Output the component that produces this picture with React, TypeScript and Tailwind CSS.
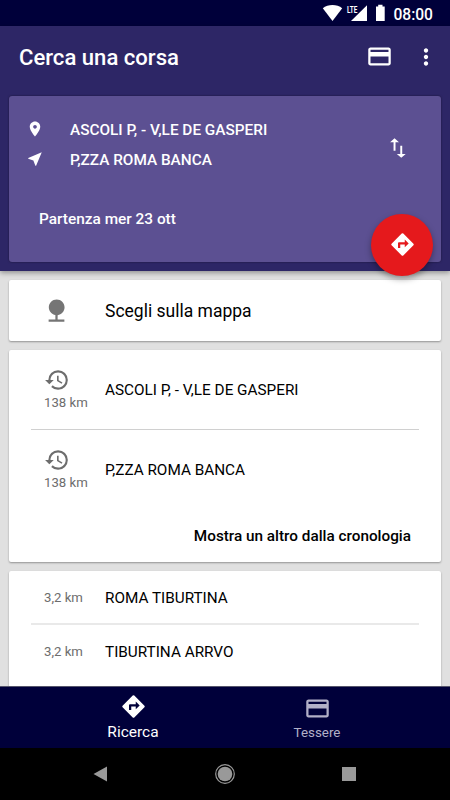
import { ReactNode } from "react";

type IconProps = {
    d: string;
    className?: string;
};

type StopRowProps = {
    distance: string;
    name: string;
    recent?: boolean;
};

const icons = {
    card: "M20 4H4c-1.11 0-1.99.89-1.99 2L2 18c0 1.11.89 2 2 2h16c1.11 0 2-.89 2-2V6c0-1.11-.89-2-2-2zm0 14H4v-6h16v6zm0-10H4V6h16v2z",
    more: "M12 8c1.1 0 2-.9 2-2s-.9-2-2-2-2 .9-2 2 .9 2 2 2zm0 2c-1.1 0-2 .9-2 2s.9 2 2 2 2-.9 2-2-.9-2-2-2zm0 6c-1.1 0-2 .9-2 2s.9 2 2 2 2-.9 2-2-.9-2-2-2z",
    place: "M12 2C8.13 2 5 5.13 5 9c0 5.25 7 13 7 13s7-7.75 7-13c0-3.87-3.13-7-7-7zm0 9.5c-1.38 0-2.5-1.12-2.5-2.5s1.12-2.5 2.5-2.5 2.5 1.12 2.5 2.5-1.12 2.5-2.5 2.5z",
    nearMe: "M21 3L3 10.53v.98l6.84 2.65L12.48 21h.98L21 3z",
    swap: "M15.9 17.6V10h-1.8v7.6h-3.2L15 21l4.1-3.4h-3.2zM8.8 3L4.7 6.6h3.2V14.5h1.8V6.6h3.2L8.8 3z",
    directions: "M21.71 11.29l-9-9a.996.996 0 0 0-1.41 0l-9 9a.996.996 0 0 0 0 1.41l9 9c.39.39 1.02.39 1.41 0l9-9a.996.996 0 0 0 0-1.41zM14 14.5V12h-4v3H8v-4c0-.55.45-1 1-1h5V7.5l3.5 3.5-3.5 3.5z",
    nature: "M13 16.12c3.47-.41 6.17-3.36 6.17-6.95 0-3.87-3.13-7-7-7s-7 3.13-7 7c0 3.47 2.52 6.34 5.83 6.89V20H5v2h14v-2h-6v-3.88z",
    history: "M13 3a9 9 0 0 0-9 9H1l3.89 3.89.07.14L9 12H6c0-3.87 3.13-7 7-7s7 3.13 7 7-3.13 7-7 7c-1.93 0-3.68-.79-4.94-2.06l-1.42 1.42A8.954 8.954 0 0 0 13 21a9 9 0 0 0 0-18zm-1 5v5l4.28 2.54.72-1.21-3.5-2.08V8H12z",
};

function Icon({ d, className = "size-[27px]" }: IconProps) {
    return (
        <svg viewBox="0 0 24 24" fill="currentColor" className={`shrink-0 ${className}`}>
            <path d={d} />
        </svg>
    );
}

function StatusBar() {
    return (
        <div className="flex h-[26px] shrink-0 items-center justify-end bg-[#00003a] pr-[17px] text-white">
            <svg viewBox="322 3 64 20" fill="currentColor" className="mr-[7px] h-5 w-16">
                <path d="M322.8 8.3C328 4 337 4 342.2 8.3L332.5 21z" />
                <path d="M367 5.3V21h-16z" />
                <path d="M376 6.5h2.2V4.8h4.3v1.7h2.2V21H376z" />
                <path d="M346 4h12v9h-12z" fill="#00003a" />
                <text x="347" y="12.6" fontSize="9.6" fontWeight="700" textLength="10.3" lengthAdjust="spacingAndGlyphs">
                    LTE
                </text>
            </svg>
            <span className="pt-[3px] text-[15.6px] leading-5 font-medium">08:00</span>
        </div>
    );
}

function Card({ children, className = "" }: { children: ReactNode; className?: string }) {
    return (
        <div className={`mx-[9px] shrink-0 rounded-[2px] bg-white shadow-[0_1px_2px_rgba(0,0,0,0.35)] ${className}`}>
            {children}
        </div>
    );
}

function StopRow({ distance, name, recent = false }: StopRowProps) {
    return (
        <div className={`flex items-center ${recent ? "h-[80px]" : "h-[54px]"}`}>
            <div className="w-[96px] shrink-0 pl-[35px] text-[#6d6d6d]">
                {recent && <Icon d={icons.history} className="-mt-px mb-px size-[26px]" />}
                <div className="text-[13.2px] leading-[18px]">{distance}</div>
            </div>
            <span className="text-[15.3px] whitespace-nowrap text-black">{name}</span>
        </div>
    );
}

function Divider({ className = "" }: { className?: string }) {
    return <div className={`mr-[22px] ml-[22px] ${className}`} />;
}

export default function App() {
    return (
        <div className="flex h-[800px] w-[450px] flex-col overflow-hidden bg-[#e0e0e0] font-[Roboto,sans-serif]">
            <StatusBar />

            <header className="relative z-10 h-[245px] shrink-0 bg-[#2d2666] text-white shadow-[0_2px_5px_rgba(0,0,0,0.35)]">
                <div className="flex h-[70px] items-center pb-[8px] pl-[19px]">
                    <h1 className="flex-1 pt-[2px] text-[22.1px] font-medium">Cerca una corsa</h1>
                    <Icon d={icons.card} className="mb-px size-[27px]" />
                    <Icon d={icons.more} className="mr-[11px] ml-5 size-[26px]" />
                </div>
                <div className="mx-[9px] flex h-[166px] rounded-[3px] bg-[#5c5092] shadow-[0_0_2px_rgba(0,0,0,0.5)]">
                    <div className="flex-1 pt-[18px] font-medium">
                        <div className="flex h-[30px] items-center pl-[17px] text-[15.35px]">
                            <Icon d={icons.place} className="mr-[26px] size-[18px]" />
                            <span className="pt-[3px]">ASCOLI P, - V,LE DE GASPERI</span>
                        </div>
                        <div className="flex h-[31px] items-center pl-[17px] text-[15.35px]">
                            <Icon d={icons.nearMe} className="mr-[26px] mb-px size-[18px]" />
                            <span className="pt-[3px]">P,ZZA ROMA BANCA</span>
                        </div>
                        <div className="mt-[32px] pl-[30px] text-[15.4px] leading-6">Partenza mer 23 ott</div>
                    </div>
                    <Icon d={icons.swap} className="mt-[39px] mr-[30px] size-[26px]" />
                </div>
                <button className="absolute top-[188px] right-[17px] flex size-[62px] items-center justify-center rounded-full bg-[#e5191c] shadow-[0_3px_6px_rgba(0,0,0,0.35)]">
                    <Icon d={icons.directions} className="mb-px size-[27px]" />
                </button>
            </header>

            <main className="flex min-h-0 flex-1 flex-col gap-[9px] overflow-hidden pt-[9px]">
                <Card className="flex h-[61px] items-center">
                    <Icon d={icons.nature} className="mr-[35px] ml-[34px] size-[27px] text-[#757575]" />
                    <span className="pt-[2px] text-[17.5px] text-black">Scegli sulla mappa</span>
                </Card>

                <Card className="h-[212px]">
                    <StopRow recent distance="138 km" name="ASCOLI P, - V,LE DE GASPERI" />
                    <Divider className="-mt-px h-px bg-[#d0d0d0]" />
                    <StopRow recent distance="138 km" name="P,ZZA ROMA BANCA" />
                    <div className="pt-[14px] pr-[30px] text-right text-[15.3px] leading-6 font-medium text-black">
                        Mostra un altro dalla cronologia
                    </div>
                </Card>

                <Card className="h-[130px]">
                    <StopRow distance="3,2 km" name="ROMA TIBURTINA" />
                    <Divider className="-mt-[2px] h-[2px] bg-[#e9e9e9]" />
                    <StopRow distance="3,2 km" name="TIBURTINA ARRVO" />
                </Card>
            </main>

            <nav className="z-10 flex h-[62px] shrink-0 border-t border-[#55556b] bg-[#00003a]">
                <div className="flex flex-1 flex-col items-center pt-[6px] pl-[41px] text-white">
                    <Icon d={icons.directions} />
                    <span className="text-[15.5px] leading-6">Ricerca</span>
                </div>
                <div className="flex flex-1 flex-col items-center pt-[8px] pr-[41px] text-[#b2b0c8]">
                    <Icon d={icons.card} />
                    <span className="text-[13.4px] leading-[21px]">Tessere</span>
                </div>
            </nav>

            <div className="flex h-[52px] shrink-0 items-center justify-between bg-black pr-[94px] pl-[93px] text-[#999]">
                <svg viewBox="0 0 14 16" fill="currentColor" className="h-4 w-[14px]">
                    <path d="M14 .5v15L.5 8z" />
                </svg>
                <svg viewBox="0 0 20 20" className="size-5">
                    <circle cx="10" cy="10" r="9.3" fill="none" stroke="currentColor" strokeWidth="1.2" />
                    <circle cx="10" cy="10" r="7.3" fill="currentColor" />
                </svg>
                <div className="size-[14px] bg-[#999]" />
            </div>
        </div>
    );
}
